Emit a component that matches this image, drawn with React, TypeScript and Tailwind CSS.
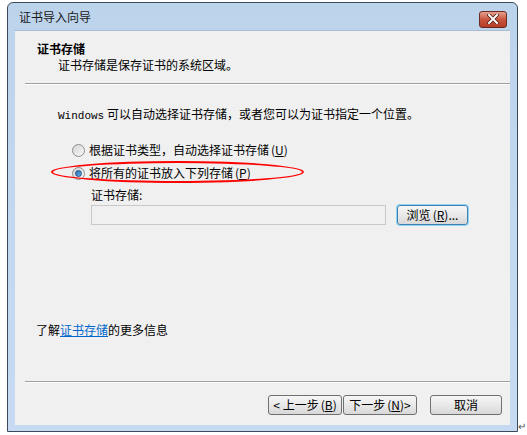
import React from 'react';

const font = { fontFamily: '"Noto Sans CJK SC", "Liberation Sans", sans-serif' };

// Win7 style push button
const Btn: React.FC<{ children: React.ReactNode; className?: string; focused?: boolean }> = ({ children, className, focused }) => (
  <div
    className={`flex items-center justify-center h-[20px] rounded-[3px] border text-[12px] leading-none text-black bg-gradient-to-b from-[#f6f6f6] via-[#e9e9e9] to-[#d8d8d8] ${
      focused ? 'border-[#3c7fb1] shadow-[0_0_0_1px_#8fd6f5]' : 'border-[#707070]'
    } ${className || ''}`}
  >
    {children}
  </div>
);

const Key: React.FC<{ k: string }> = ({ k }) => (
  <span className="ml-[2px]">
    (<span className="underline underline-offset-1">{k}</span>)
  </span>
);

const Radio: React.FC<{ checked?: boolean }> = ({ checked }) => (
  <div className="w-[13px] h-[13px] rounded-full border border-[#8e8f8f] bg-gradient-to-br from-[#d4d4d4] to-[#f8f8f8] flex items-center justify-center">
    {checked && <div className="w-[7px] h-[7px] rounded-full bg-gradient-to-br from-[#2a6cb0] to-[#64b4f0] border border-[#1e4f8a]" />}
  </div>
);

const App: React.FC = () => {
  return (
    <div className="w-[527px] h-[435px] bg-white relative overflow-hidden text-[12px] text-black" style={font}>
      <div className="ml-[7px] mt-[2px] w-[511px] h-[430px] border border-[#3b4b5c] rounded-t-[6px] flex flex-col bg-gradient-to-b from-[#bcd3ec] via-[#c2d8ef] to-[#c6dbf1]">
        {/* title bar */}
        <div className="h-[27px] flex items-center pl-[11px] pr-[10px]">
          <span className="text-[12px] text-[#1a1a1a] mt-[1px]">证书导入向导</span>
          <div className="ml-auto mt-[5px] w-[28px] h-[17px] rounded-[3px] border border-[#6b2b22] bg-gradient-to-b from-[#e5a08f] via-[#c8553d] to-[#b53d26] flex items-center justify-center">
            <svg width="12" height="10" viewBox="0 0 12 10">
              <path d="M2 1 L10 9 M10 1 L2 9" stroke="#4a1a12" strokeWidth="3.4" strokeLinecap="square" />
              <path d="M2 1 L10 9 M10 1 L2 9" stroke="#ffffff" strokeWidth="2" strokeLinecap="square" />
            </svg>
          </div>
        </div>

        {/* client area */}
        <div className="mx-[7px] mb-[6px] flex-1 bg-[#f0f0f0] border-t border-[#a8bcd2] flex flex-col">
          <div className="pl-[22px] pt-[10px] h-[52px]">
            <div className="font-bold leading-[16px]">证书存储</div>
            <div className="pl-[21px] leading-[16px]">证书存储是保存证书的系统区域。</div>
          </div>
          <div className="ml-[10px] h-[2px] border-t border-[#a0a0a0] border-b border-b-white" />

          <div className="pl-[43px] pt-[21px] leading-[16px]">
            <span style={{ fontFamily: '"Liberation Mono", monospace' }} className="text-[11px]">Windows</span> 可以自动选择证书存储，或者您可以为证书指定一个位置。
          </div>

          <div className="pl-[57px] pt-[18px] flex flex-col gap-[7px]">
            <div className="flex items-center gap-[4px] h-[16px]">
              <Radio />
              <span>根据证书类型，自动选择证书存储<Key k="U" /></span>
            </div>
            <div className="flex items-center gap-[4px] h-[16px] relative">
              <Radio checked />
              <span>将所有的证书放入下列存储<Key k="P" /></span>
              <div className="absolute left-[-21px] top-[-4px] w-[253px] h-[22px] rounded-[50%] border-[2px] border-[#ff0000]" />
            </div>
          </div>

          <div className="pl-[76px] pt-[6px]">
            <div className="leading-[16px]">证书存储:</div>
            <div className="flex items-center mt-[2px]">
              <div className="w-[295px] h-[20px] border border-[#c9c9c9] bg-[#f0f0f0]" />
              <Btn focused className="ml-[11px] w-[71px]">
                浏览<Key k="R" />...
              </Btn>
            </div>
          </div>

          <div className="flex-1" />

          <div className="pl-[21px] leading-[16px] mb-[43px]">
            了解<span className="text-[#0066cc] underline">证书存储</span>的更多信息
          </div>

          <div className="ml-[10px] h-[2px] border-t border-[#a0a0a0] border-b border-b-white" />

          <div className="flex items-center pt-[12px] pb-[10px] pl-[253px]">
            <Btn className="w-[74px]">&lt; 上一步<Key k="B" /></Btn>
            <Btn className="ml-[1px] w-[74px]">下一步<Key k="N" /> &gt;</Btn>
            <Btn className="ml-[13px] w-[72px]">取消</Btn>
          </div>
        </div>
      </div>
      <div className="absolute left-[518px] top-[420px] text-[10px] leading-[12px] text-[#555]">↵</div>
    </div>
  );
};

export default App;
